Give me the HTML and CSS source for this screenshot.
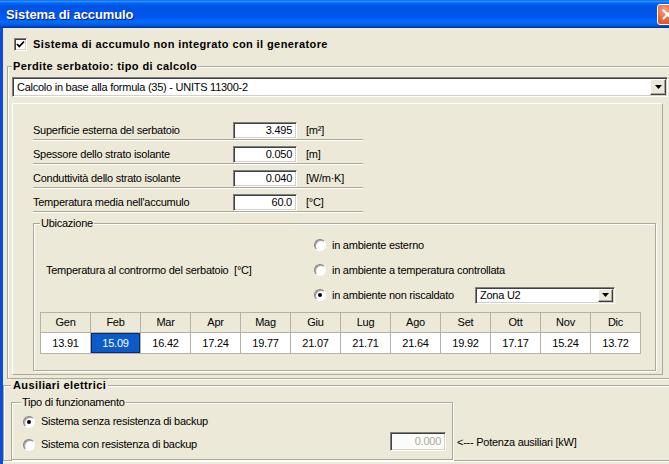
FILE: index.html
```html
<!DOCTYPE html>
<html>
<head>
<meta charset="utf-8">
<title>Sistema di accumulo</title>
<link rel="stylesheet" href="styles.css">
</head>
<body>
<div class="window">
  <div class="titlebar">
    <span class="title">Sistema di accumulo</span>
    <div class="close">
      <svg width="19" height="19" viewBox="0 0 19 19"><path d="M5.5 5.5 L13.5 13.5 M13.5 5.5 L5.5 13.5" stroke="#fff" stroke-width="2.2" stroke-linecap="round"/></svg>
    </div>
  </div>
  <div class="client">
    <div class="check-row">
      <span class="checkbox"><svg width="9" height="9" viewBox="0 0 9 9"><path d="M1 4 L3.3 6.5 L8 1.5" fill="none" stroke="#000" stroke-width="1.8"/></svg></span>
      <span class="bold">Sistema di accumulo non integrato con il generatore</span>
    </div>

    <fieldset class="group perdite">
      <legend class="bold">Perdite serbatoio: tipo di calcolo</legend>
      <div class="combo combo-wide">
        <span class="combo-text">Calcolo in base alla formula (35) - UNITS 11300-2</span>
        <span class="combo-btn"><svg width="7" height="4" viewBox="0 0 7 4"><path d="M0 0 H7 L3.5 4 Z" fill="#000"/></svg></span>
      </div>

      <div class="panel">
        <div class="rows">
          <div class="row"><span class="row-label">Superficie esterna del serbatoio</span><span class="field">3.495</span><span class="unit">[m²]</span></div>
          <div class="row"><span class="row-label">Spessore dello strato isolante</span><span class="field">0.050</span><span class="unit">[m]</span></div>
          <div class="row"><span class="row-label">Conduttività dello strato isolante</span><span class="field">0.040</span><span class="unit">[W/m·K]</span></div>
          <div class="row"><span class="row-label">Temperatura media nell'accumulo</span><span class="field">60.0</span><span class="unit">[°C]</span></div>
        </div>

        <fieldset class="group ubicazione">
          <legend>Ubicazione</legend>
          <div class="ubi-top">
            <div class="ubi-label">Temperatura al contrormo del serbatoio&nbsp; [°C]</div>
            <div class="radios">
              <div class="radio-row"><span class="radio"></span><span>in ambiente esterno</span></div>
              <div class="radio-row"><span class="radio"></span><span>in ambiente a temperatura controllata</span></div>
              <div class="radio-row">
                <span class="radio checked"></span><span class="radio-fixed">in ambiente non riscaldato</span>
                <div class="combo combo-zona">
                  <span class="combo-text">Zona U2</span>
                  <span class="combo-btn small"><svg width="7" height="4" viewBox="0 0 7 4"><path d="M0 0 H7 L3.5 4 Z" fill="#000"/></svg></span>
                </div>
              </div>
            </div>
          </div>

          <div class="months">
            <div class="mh">Gen</div><div class="mh">Feb</div><div class="mh">Mar</div><div class="mh">Apr</div>
            <div class="mh">Mag</div><div class="mh">Giu</div><div class="mh">Lug</div><div class="mh">Ago</div>
            <div class="mh">Set</div><div class="mh">Ott</div><div class="mh">Nov</div><div class="mh">Dic</div>
            <div class="md">13.91</div><div class="md sel">15.09</div><div class="md">16.42</div><div class="md">17.24</div>
            <div class="md">19.77</div><div class="md">21.07</div><div class="md">21.71</div><div class="md">21.64</div>
            <div class="md">19.92</div><div class="md">17.17</div><div class="md">15.24</div><div class="md">13.72</div>
          </div>
        </fieldset>
      </div>
    </fieldset>

    <fieldset class="group ausiliari">
      <legend class="bold">Ausiliari elettrici</legend>
      <div class="aus-body">
        <fieldset class="group tipo">
          <legend>Tipo di funzionamento</legend>
          <div class="tipo-row"><span class="radio checked"></span><span>Sistema senza resistenza di backup</span></div>
          <div class="tipo-row"><span class="radio"></span><span>Sistema con resistenza di backup</span><span class="field disabled">0.000</span></div>
        </fieldset>
        <span class="aux-label">&lt;--- Potenza ausiliari [kW]</span>
      </div>
    </fieldset>
  </div>
</div>
</body>
</html>
```

FILE: styles.css
```css
* { box-sizing: border-box; }
html, body { margin: 0; padding: 0; }
body {
  width: 669px;
  height: 464px;
  overflow: hidden;
  background: #ECE9D8;
  font-family: "Liberation Sans", Arial, sans-serif;
  font-size: 11px;
  line-height: 13px;
  letter-spacing: -0.25px;
  color: #000;
}
.bold { font-weight: bold; letter-spacing: 0.4px; }

.window {
  width: 669px;
  height: 464px;
  overflow: hidden;
  display: flex;
  flex-direction: column;
}

.titlebar {
  height: 28px;
  flex: none;
  display: flex;
  align-items: center;
  justify-content: space-between;
  padding-left: 6px;
  overflow: hidden;
  background: linear-gradient(to bottom, #0058EE 0%, #3A93FF 4%, #288EFF 6%, #127DFF 8%, #036FFC 10%, #0262EE 14%, #0057E5 20%, #0054E3 24%, #0055EB 56%, #005BF5 66%, #026AFE 76%, #0062EF 86%, #0052D6 92%, #0040AB 96%, #003092 100%);
}
.title {
  color: #fff;
  font-weight: bold;
  font-size: 13px;
  letter-spacing: -0.1px;
  text-shadow: 1px 1px 0 #0A1E7A;
}
.close {
  width: 21px;
  height: 21px;
  flex: none;
  margin-right: -9px;
  border: 1px solid #fff;
  border-radius: 3px;
  background: radial-gradient(circle at 35% 30%, #F6A488 0%, #E8693F 45%, #D2471E 100%);
  display: flex;
  align-items: center;
  justify-content: center;
}

.client {
  flex: 1;
  border-left: 3px solid #0B4CD9;
  background: #ECE9D8;
  display: flex;
  flex-direction: column;
  align-items: flex-start;
}

.check-row {
  display: flex;
  align-items: center;
  gap: 6px;
  height: 13px;
  margin: 10px 0 0 11px;
}
.checkbox {
  width: 13px;
  height: 13px;
  flex: none;
  background: #fff;
  border: 1px solid;
  border-color: #808080 #fff #fff #808080;
  box-shadow: inset 1px 1px 0 #404040, inset -1px -1px 0 #D4D0C8;
  display: flex;
  align-items: center;
  justify-content: center;
}

/* group boxes */
.group {
  margin: 0;
  min-width: 0;
  border: 1px solid #ACA899;
  box-shadow: inset 1px 1px 0 #fff, 1px 1px 0 #fff;
}
.group > legend {
  padding: 0 1px;
  line-height: 13px;
  background: #ECE9D8;
}

.perdite {
  width: 674px;
  margin-top: 9px;
  margin-left: 4px;
  padding: 4px 0 3px 4px;
}

.combo {
  display: flex;
  align-items: center;
  background: #fff;
  border: 1px solid;
  border-color: #808080 #fff #fff #808080;
  box-shadow: inset 1px 1px 0 #404040, inset -1px -1px 0 #D4D0C8;
  padding: 1px;
}
.combo-text { flex: 1; padding-left: 3px; white-space: nowrap; }
.combo-wide { width: 656px; height: 20px; }
.combo-btn {
  width: 16px;
  height: 16px;
  flex: none;
  background: #ECE9D8;
  border: 1px solid;
  border-color: #fff #404040 #404040 #fff;
  box-shadow: inset -1px -1px 0 #ACA899;
  display: flex;
  align-items: center;
  justify-content: center;
}
.combo-btn.small { width: 15px; height: 13px; }
.combo-zona { width: 140px; height: 17px; }

.panel {
  width: 651px;
  margin-top: 6px;
  border: 1px solid;
  border-color: #fff #ACA899 #ACA899 #fff;
  padding: 18px 6px 3px 20px;
}

.rows {
  width: 330px;
  display: flex;
  flex-direction: column;
  gap: 6px;
}
.row {
  display: flex;
  align-items: center;
  height: 18px;
  border-bottom: 1px solid #ACA899;
  box-shadow: 0 1px 0 #fff;
}
.row-label { width: 200px; flex: none; }
.field {
  width: 64px;
  height: 17px;
  flex: none;
  display: flex;
  align-items: center;
  justify-content: flex-end;
  padding-right: 4px;
  background: #fff;
  border: 1px solid;
  border-color: #808080 #fff #fff #808080;
  box-shadow: inset 1px 1px 0 #404040, inset -1px -1px 0 #D4D0C8;
}
.unit { margin-left: 9px; }

.ubicazione {
  width: 623px;
  margin-top: 5px;
  padding: 3px 6px 16px 6px;
}
.ubi-top { display: flex; }
.ubi-label {
  width: 274px;
  flex: none;
  padding-left: 6px;
  align-self: center;
}
.radios { display: flex; flex-direction: column; gap: 1px; }
.radio-row {
  display: flex;
  align-items: center;
  height: 24px;
}
.radio {
  width: 12px;
  height: 12px;
  flex: none;
  margin-right: 6px;
  border-radius: 50%;
  border: 1px solid;
  border-color: #808080 #fff #fff #808080;
  background: radial-gradient(circle at 65% 65%, #fff 0%, #fff 45%, #E2DFD6 100%);
  box-shadow: inset 1px 1px 0 #A0A0A0;
  display: flex;
  align-items: center;
  justify-content: center;
}
.radio.checked::after {
  content: "";
  width: 4px;
  height: 4px;
  border-radius: 50%;
  background: #000;
}
.radio-fixed { width: 143px; flex: none; }

.months {
  margin-top: 5px;
  width: 601px;
  display: grid;
  grid-template-columns: repeat(12, 50px);
  border-left: 1px solid #B5B2A5;
  border-top: 1px solid #B5B2A5;
}
.mh, .md {
  display: flex;
  align-items: center;
  justify-content: center;
  border-right: 1px solid #B5B2A5;
  border-bottom: 1px solid #B5B2A5;
}
.mh { height: 20px; background: #ECE9D8; }
.md { height: 21px; background: #fff; }
.md.sel {
  background: #0B5BCB;
  color: #fff;
  box-shadow: inset 0 0 0 1px #0A2A6A;
}

.ausiliari {
  width: 700px;
  padding: 4px 0 0 7px;
  border-right: none;
}
.ausiliari > legend { padding: 0 2px; }
.aus-body { display: flex; }
.tipo {
  width: 442px;
  flex: none;
  padding: 1px 6px 3px 11px;
}
.tipo > legend { margin-left: -2px; }
.tipo-row {
  display: flex;
  align-items: center;
  height: 23px;
}
.field.disabled {
  margin-left: auto;
  align-self: flex-start;
  margin-top: -1px;
  width: 56px;
  height: 19px;
  color: #ACA899;
  background: #FBFBF9;
}
.aux-label {
  margin-left: 4px;
  align-self: flex-end;
  margin-bottom: 11px;
  white-space: nowrap;
}
```
